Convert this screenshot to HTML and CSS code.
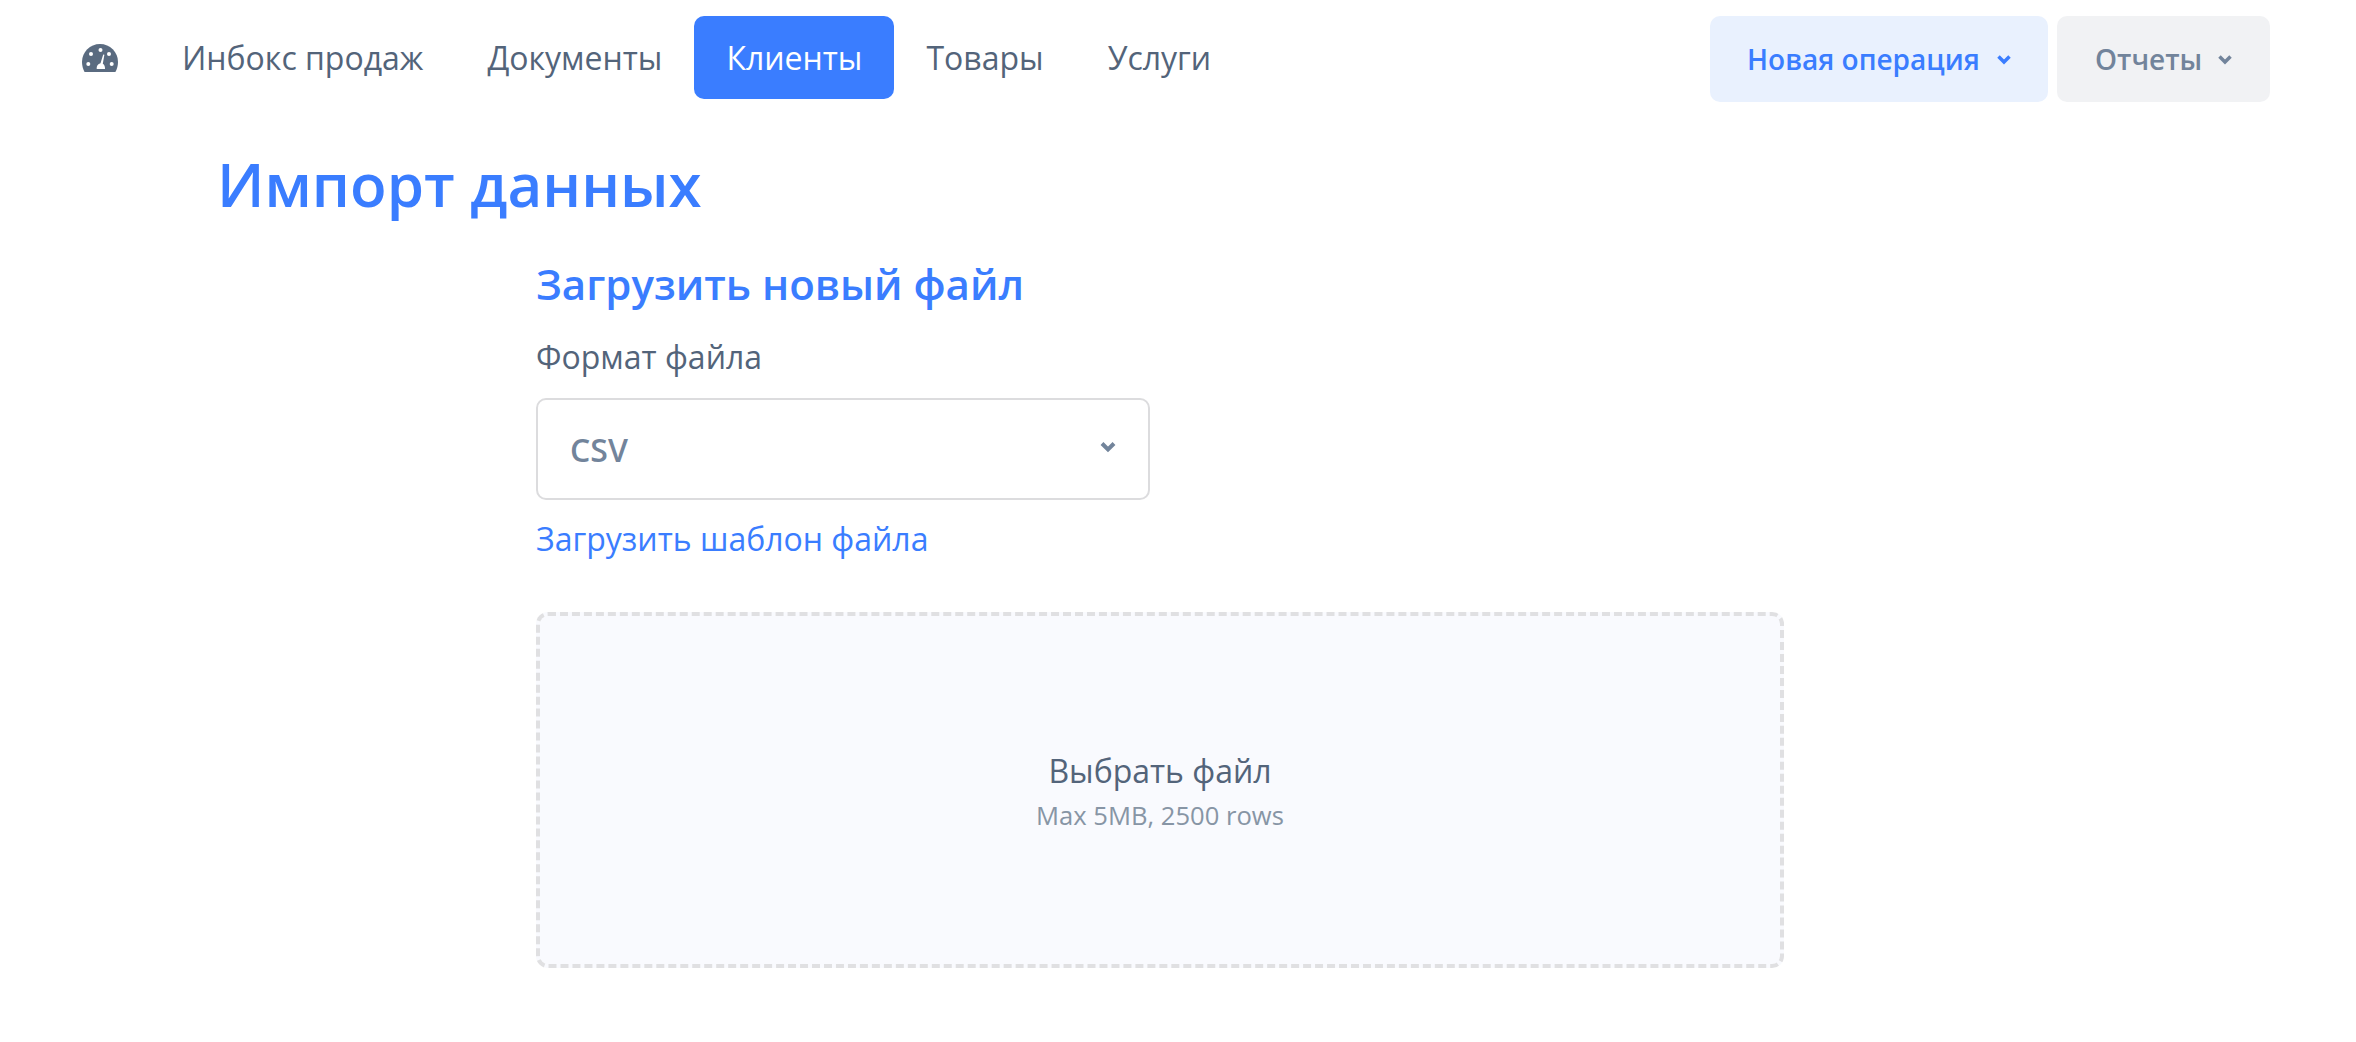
FILE: index.html
```html
<!DOCTYPE html>
<html lang="ru">
<head>
<meta charset="utf-8">
<title>Импорт данных</title>
<link rel="stylesheet" href="styles.css">
</head>
<body>
<header class="topbar">
  <nav class="nav">
    <a class="nav-icon" aria-label="Панель">
      <svg width="36" height="28" viewBox="0 0 36 28"><path fill="#5a6b80" d="M18 0C8 0 0 8 0 18c0 3.500.9 7 2.600 10h30.800C35.100 25 36 21.500 36 18 36 8 28 0 18 0z"/><g fill="#fff"><circle cx="9" cy="10" r="2"/><circle cx="18.500" cy="6" r="2"/><circle cx="27" cy="10" r="2"/><circle cx="6.300" cy="20" r="2"/><circle cx="29.700" cy="20" r="2"/><path d="M21.200 10.500l1.200.3-1.600 9c1.500.9 2.400 2.800 2.200 5.200h-8.300c-.4-2.900 1.200-5.300 3.800-5.700z"/></g></svg>
    </a>
    <a class="nav-item">Инбокс продаж</a>
    <a class="nav-item">Документы</a>
    <a class="nav-item is-active">Клиенты</a>
    <a class="nav-item">Товары</a>
    <a class="nav-item">Услуги</a>
  </nav>
  <div class="actions">
    <button class="btn btn-primary">Новая операция<svg class="chev" width="14" height="10" viewBox="0 0 14 10"><path d="M1.500 1.500L7 7l5.500-5.500" fill="none" stroke="currentColor" stroke-width="3.500"/></svg></button>
    <button class="btn btn-muted">Отчеты<svg class="chev" width="14" height="10" viewBox="0 0 14 10"><path d="M1.500 1.500L7 7l5.500-5.500" fill="none" stroke="currentColor" stroke-width="3.500"/></svg></button>
  </div>
</header>
<main class="page">
  <h1 class="title">Импорт данных</h1>
  <section class="upload">
    <h2 class="subtitle">Загрузить новый файл</h2>
    <div class="label">Формат файла</div>
    <div class="select"><span>CSV</span><svg class="select-chev" width="16" height="11" viewBox="0 0 16 11"><path d="M2 1.500l6 6 6-6" fill="none" stroke="currentColor" stroke-width="4"/></svg></div>
    <a class="link">Загрузить шаблон файла</a>
    <div class="drop">
      <div class="drop-title">Выбрать файл</div>
      <div class="drop-hint">Max 5MB, 2500 rows</div>
    </div>
  </section>
</main>
</body>
</html>
```
FILE: styles.css
```css
* { box-sizing: border-box; }
html, body { margin: 0; padding: 0; background: #fff; }
body { font-family: "Open Sans", "Noto Sans", sans-serif; color: #53647a; height: 1042px; overflow: hidden; }
.topbar { display: flex; justify-content: space-between; align-items: flex-start; padding: 16px 86px 0 82px; }
.nav { display: flex; align-items: center; height: 83px; }
.nav-icon { display: flex; margin-right: 32px; }
.nav-item { font-size: 32px; line-height: 83px; padding: 0 32px; border-radius: 10px; color: #53647a; white-space: nowrap; }
.is-active { background: #3a7dff; color: #fff; }
.actions { display: flex; gap: 9px; }
.btn { height: 86px; border: 0; border-radius: 10px; font-family: inherit; font-size: 28px; font-weight: 600; display: flex; align-items: center; gap: 16px; padding: 0 38px; white-space: nowrap; }
.chev { flex: none; margin-top: 2px; }
.btn-primary { background: #e9f1fe; color: #3a7dff; width: 338px; padding-left: 37px; gap: 17px; }
.btn-muted { background: #f1f2f4; color: #72849b; width: 213px; }
.page { padding: 0 0 0 217px; }
.title { margin: 42px 0 0; font-size: 60px; line-height: 80px; font-weight: 600; color: #3a7dff; }
.upload { margin-left: 319px; width: 1248px; }
.subtitle { margin: 32px 0 0; font-size: 42px; line-height: 56px; font-weight: 600; color: #3a7dff; }
.label { margin-top: 24px; font-size: 32px; line-height: 42px; }
.select { margin-top: 20px; width: 614px; height: 102px; border: 2px solid #dcdcde; border-radius: 10px; display: flex; align-items: center; justify-content: space-between; padding: 0 32px; font-size: 32px; font-weight: 600; color: #72849b; }
.select-chev { color: #72849b; margin-top: -4px; flex: none; }
.link { display: block; margin-top: 18px; font-size: 32px; line-height: 42px; color: #3a7dff; }
.drop { margin-top: 52px; height: 356px; border: 4px dashed #e0e0e2; border-radius: 12px; background: #f9fafe; display: flex; flex-direction: column; align-items: center; padding-top: 134px; }
.drop-title { font-size: 32px; line-height: 42px; }
.drop-hint { margin-top: 8px; font-size: 25.6px; line-height: 32px; color: #8795a5; }
```
